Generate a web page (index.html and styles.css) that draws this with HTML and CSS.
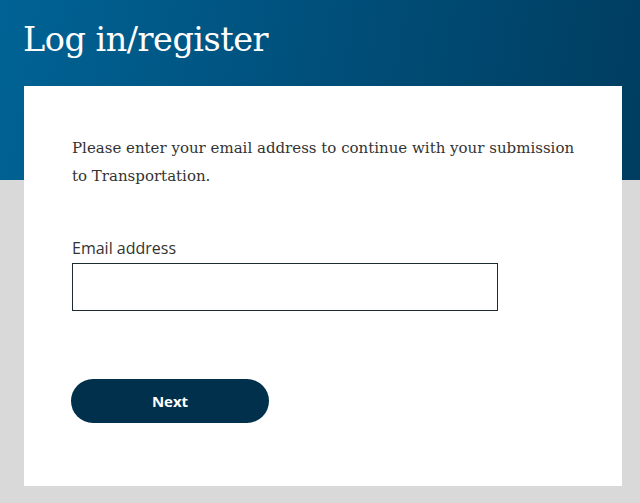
FILE: index.html
```html
<!DOCTYPE html>
<html lang="en">
<head>
<meta charset="utf-8">
<title>Log in/register</title>
<link rel="stylesheet" href="styles.css">
</head>
<body>
<header class="hero">
  <h1 class="hero-title">Log in/register</h1>
</header>
<main class="page">
  <section class="card">
    <p class="intro">Please enter your email address to continue with your submission to Transportation.</p>
    <form class="form">
      <label class="label" for="email">Email address</label>
      <input class="input" id="email" type="email">
      <button class="btn" type="button">Next</button>
    </form>
  </section>
</main>
</body>
</html>
```
FILE: styles.css
```css
html, body {
  margin: 0;
  padding: 0;
}
body {
  background: #d9d9d9;
  height: 503px;
  overflow: hidden;
  font-family: "DejaVu Serif", serif;
}
.hero {
  height: 180px;
  background: linear-gradient(100deg, #006395 0%, #004f7a 50%, #003d60 100%);
  box-sizing: border-box;
  padding: 18px 0 0 23px;
}
.hero-title {
  margin: 0;
  color: #fff;
  font-family: "DejaVu Serif", serif;
  font-weight: 300;
  font-size: 33.5px;
  line-height: 44px;
  letter-spacing: -0.5px;
}
.page {
  margin-top: -94px;
  padding: 0 18px 0 24px;
}
.card {
  background: #fff;
  height: 400px;
  box-sizing: border-box;
  padding: 48px 48px 0 48px;
}
.intro {
  margin: 0;
  width: 510px;
  color: #333;
  font-size: 15px;
  line-height: 28px;
}
.form {
  display: flex;
  flex-direction: column;
  align-items: flex-start;
  margin-top: 46px;
}
.label {
  font-family: "Open Sans", sans-serif;
  font-size: 16px;
  color: #333;
  line-height: 24px;
  margin-bottom: 3px;
}
.input {
  width: 426px;
  height: 48px;
  box-sizing: border-box;
  border: 1px solid #1d2b33;
  margin: 0;
  padding: 0 12px;
}
.btn {
  margin-top: 68px;
  margin-left: -1px;
  width: 198px;
  height: 44px;
  border: 0;
  border-radius: 22px;
  background: #00304c;
  color: #fff;
  font-family: "Open Sans", sans-serif;
  font-weight: 700;
  font-size: 15px;
}
```
